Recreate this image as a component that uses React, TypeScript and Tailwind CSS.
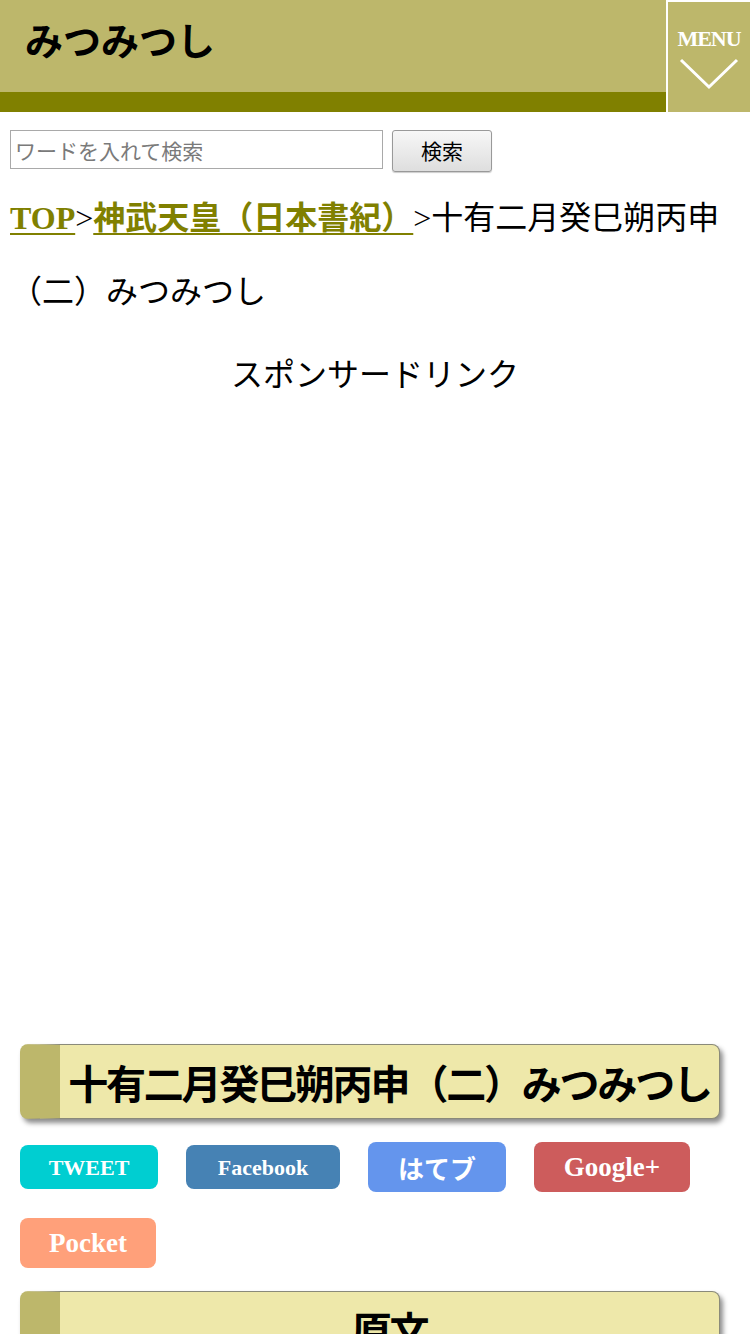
import React from "react";

const JP = { fontFamily: '"Noto Sans CJK JP", "Noto Sans", sans-serif' };
const SERIF_JP = { fontFamily: '"Liberation Serif", "Noto Sans CJK JP", serif' };

function Heading({ children }: { children: React.ReactNode }) {
  return (
    <div className="mx-[20px] w-[700px] h-[75px] flex items-center justify-center rounded-[8px] bg-[#eee8aa] border border-[#8a8a7a] border-l-[40px] border-l-[#bdb76b] shadow-[3px_4px_5px_rgba(0,0,0,0.45)]">
      <h2 className="text-[40px] font-bold leading-none text-black whitespace-nowrap tracking-[-2.2px]" style={JP}>
        {children}
      </h2>
    </div>
  );
}

function Share({ label, bg, w, h, size, jp }: { label: string; bg: string; w: string; h: string; size: string; jp?: boolean }) {
  return (
    <div className={`${bg} ${w} ${h} rounded-[8px] flex items-center justify-center text-white font-bold ${size}`} style={jp ? JP : SERIF_JP}>
      {label}
    </div>
  );
}

export default function App() {
  return (
    <div className="w-[750px] bg-white min-h-[1334px] overflow-hidden" style={JP}>
      {/* Header */}
      <header className="flex h-[112px]">
        <div className="flex-1 flex flex-col">
          <div className="h-[92px] bg-[#bdb76b] flex items-center pl-[25px] pb-[14px]">
            <h1 className="text-[38px] font-bold text-black leading-none" style={JP}>みつみつし</h1>
          </div>
          <div className="h-[20px] bg-[#808000]" />
        </div>
        <div className="w-[84px] bg-[#bdb76b] border-l-2 border-t-2 border-white flex flex-col items-center pt-[26px]">
          <span className="text-white font-bold text-[22px] leading-none tracking-[-1px]" style={{ fontFamily: '"Liberation Serif", serif' }}>MENU</span>
          <svg width="60" height="32" viewBox="0 0 60 32" className="mt-[8px]">
            <polyline points="2,2 30,29 58,2" fill="none" stroke="white" strokeWidth="3" />
          </svg>
        </div>
      </header>

      {/* Search */}
      <div className="flex items-start gap-[9px] pl-[10px] pt-[18px]">
        <input
          className="w-[373px] h-[39px] border border-[#a9a9a9] px-[4px] text-[21px] text-black placeholder:text-[#7a7a7a] outline-none"
          placeholder="ワードを入れて検索"
          style={JP}
        />
        <button
          className="w-[100px] h-[42px] border border-[#999] rounded-[3px] bg-gradient-to-b from-[#f7f7f7] to-[#dedede] text-[21px] text-black shadow-[0_1px_1px_rgba(0,0,0,0.2)]"
          style={JP}
        >
          検索
        </button>
      </div>

      {/* Breadcrumb */}
      <p className="mt-[8px] px-[10px] text-[32px] leading-[71px] text-black" style={JP}>
        <a className="font-bold text-[#808000] underline decoration-2 underline-offset-[4px]" style={{ fontFamily: '"Liberation Serif", serif' }}>TOP</a>
        <span style={{ fontFamily: '"Liberation Serif", serif' }}>&gt;</span>
        <a className="font-bold text-[#808000] underline decoration-2 underline-offset-[4px]">神武天皇（日本書紀）</a>
        <span style={{ fontFamily: '"Liberation Serif", serif' }}>&gt;</span>十有二月癸巳朔丙申（二）みつみつし
      </p>

      {/* Sponsor */}
      <p className="mt-[11px] text-center text-[32px] leading-[72px] text-black">スポンサードリンク</p>
      <div className="h-[636px]" />

      <Heading>十有二月癸巳朔丙申（二）みつみつし</Heading>

      {/* Share buttons */}
      <div className="px-[20px] mt-[23px] flex flex-wrap items-center gap-x-[28px] gap-y-[26px] w-[730px]">
        <Share label="TWEET" bg="bg-[#00ced1]" w="w-[138px]" h="h-[44px]" size="text-[22px]" />
        <Share label="Facebook" bg="bg-[#4682b4]" w="w-[154px]" h="h-[44px]" size="text-[22px]" />
        <Share label="はてブ" bg="bg-[#6495ed]" w="w-[138px]" h="h-[50px]" size="text-[26px]" jp />
        <Share label="Google+" bg="bg-[#cd5c5c]" w="w-[156px]" h="h-[50px]" size="text-[27px]" />
        <Share label="Pocket" bg="bg-[#ffa07a]" w="w-[136px]" h="h-[50px]" size="text-[27px]" />
      </div>

      <div className="mt-[23px]">
        <Heading>原文</Heading>
      </div>
    </div>
  );
}
